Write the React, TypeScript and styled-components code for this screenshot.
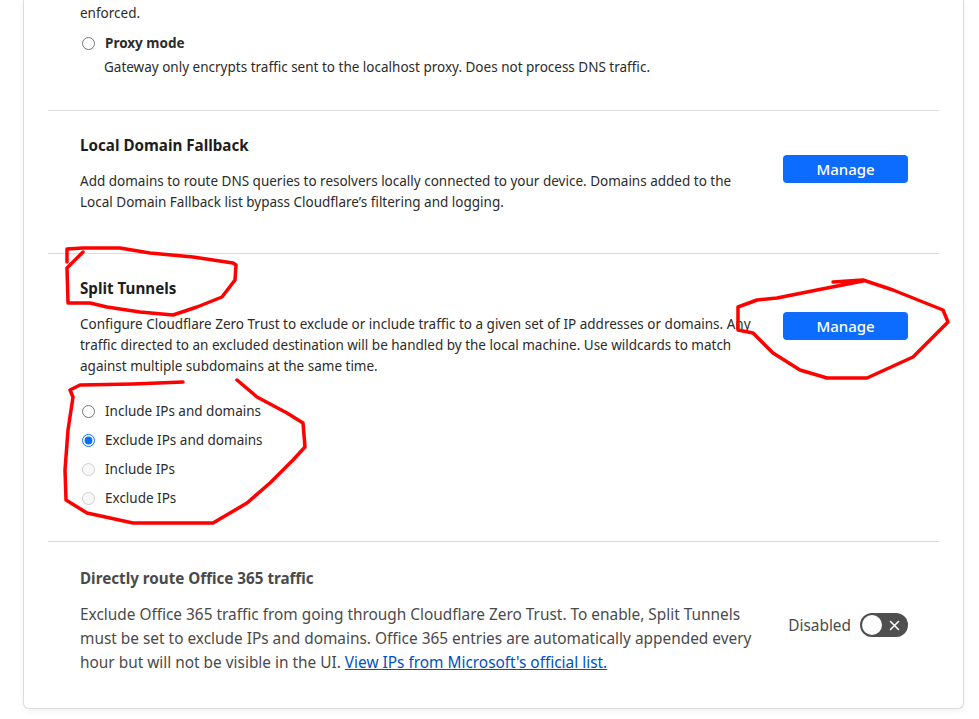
import React, { FC } from "react";
import styled, { createGlobalStyle } from "styled-components";

const GlobalStyle = createGlobalStyle`
  html, body {
    margin: 0;
    padding: 0;
    background: #ffffff;
  }
  body {
    font-family: "Noto Sans", "Open Sans", sans-serif;
    color: #1d1d1d;
  }
`;

const Page = styled.div`
  position: relative;
  width: 979px;
  height: 719px;
  overflow: hidden;
  padding-left: 23px;
  box-sizing: border-box;
`;

const Card = styled.div`
  width: 941px;
  box-sizing: border-box;
  background: #ffffff;
  border: 1px solid #dcdcdc;
  border-top: none;
  border-radius: 0 0 6px 6px;
  box-shadow: 0 2px 6px rgba(0, 0, 0, 0.06);
  padding: 0 24px;
`;

const Section = styled.div<{ $top: number; $bottom: number }>`
  display: flex;
  align-items: flex-start;
  padding: ${(p) => p.$top}px 31px ${(p) => p.$bottom}px 32px;
  & + & {
    border-top: 1px solid #dcdcdc;
  }
`;

const Content = styled.div`
  flex: 0 0 678px;
`;

const Aside = styled.div<{ $offset: number }>`
  margin-left: auto;
  margin-top: ${(p) => p.$offset}px;
  display: flex;
  align-items: center;
  gap: 9px;
`;

const Title = styled.div<{ $muted?: boolean }>`
  font-size: 15.2px;
  line-height: 24px;
  font-weight: 700;
  color: ${(p) => (p.$muted ? "#4a4a4a" : "#1d1d1d")};
`;

const Desc = styled.p<{ $gap: number; $large?: boolean }>`
  margin: ${(p) => p.$gap}px 0 0;
  font-size: ${(p) => (p.$large ? 15.4 : 13.5)}px;
  line-height: ${(p) => (p.$large ? 24 : 21)}px;
  color: ${(p) => (p.$large ? "#4a4a4a" : "#2b2b2b")};
`;

const Small = styled.div`
  font-size: 13.5px;
  line-height: 20px;
  color: #2b2b2b;
`;

const RadioList = styled.div<{ $gap: number }>`
  display: flex;
  flex-direction: column;
  gap: 9px;
  margin-top: ${(p) => p.$gap}px;
`;

const RadioRow = styled.label<{ $bold?: boolean }>`
  display: flex;
  align-items: center;
  height: 20px;
  font-size: 13.5px;
  font-weight: ${(p) => (p.$bold ? 700 : 400)};
  color: #2b2b2b;
  input {
    width: 13px;
    height: 13px;
    margin: 0 10px 0 2px;
    accent-color: #0b6cff;
  }
`;

const Hint = styled.div`
  margin: 4px 0 0 24px;
  font-size: 13.5px;
  line-height: 20px;
  color: #2b2b2b;
`;

const Button = styled.button`
  width: 125px;
  height: 28px;
  border: none;
  border-radius: 4px;
  background: #0b6cff;
  color: #ffffff;
  font-family: inherit;
  font-size: 15px;
  font-weight: 500;
  cursor: pointer;
`;

const Link = styled.a`
  color: #0051c3;
  text-decoration: underline;
`;

const ToggleLabel = styled.span`
  font-size: 15.4px;
  color: #4a4a4a;
`;

const Toggle = styled.div`
  position: relative;
  width: 48px;
  height: 24px;
  border-radius: 12px;
  background: #4f4f4f;
  display: flex;
  align-items: center;
  justify-content: flex-end;
  padding-right: 8px;
  box-sizing: border-box;
`;

const Knob = styled.span`
  position: absolute;
  left: 2px;
  top: 2px;
  width: 20px;
  height: 20px;
  border-radius: 50%;
  background: #ffffff;
`;

const Marks = styled.svg`
  position: absolute;
  top: 0;
  left: 0;
  pointer-events: none;
`;

const Radio: FC<{ label: string; checked?: boolean; disabled?: boolean; bold?: boolean }> = ({
  label,
  checked,
  disabled,
  bold,
}) => (
  <RadioRow $bold={bold}>
    <input type="radio" name={bold ? "mode" : "split"} defaultChecked={checked} disabled={disabled} />
    {label}
  </RadioRow>
);

const stroke = {
  fill: "none",
  stroke: "#ff0000",
  strokeWidth: 3.5,
  strokeLinejoin: "round" as const,
  strokeLinecap: "round" as const,
};

export default function App() {
  return (
    <>
      <GlobalStyle />
      <Page>
        <Card>
          <Section $top={3} $bottom={33}>
            <Content>
              <Small>enforced.</Small>
              <RadioList $gap={10}>
                <div>
                  <Radio label="Proxy mode" bold />
                  <Hint>Gateway only encrypts traffic sent to the localhost proxy. Does not process DNS traffic.</Hint>
                </div>
              </RadioList>
            </Content>
          </Section>

          <Section $top={22} $bottom={40}>
            <Content>
              <Title>Local Domain Fallback</Title>
              <Desc $gap={14}>
                Add domains to route DNS queries to resolvers locally connected to your device. Domains added to the
                Local Domain Fallback list bypass Cloudflare’s filtering and logging.
              </Desc>
            </Content>
            <Aside $offset={22}>
              <Button>Manage</Button>
            </Aside>
          </Section>

          <Section $top={22} $bottom={33}>
            <Content>
              <Title>Split Tunnels</Title>
              <Desc $gap={14}>
                Configure Cloudflare Zero Trust to exclude or include traffic to a given set of IP addresses or domains. Any
                traffic directed to an excluded destination will be handled by the local machine. Use wildcards to match
                against multiple subdomains at the same time.
              </Desc>
              <RadioList $gap={24}>
                <Radio label="Include IPs and domains" />
                <Radio label="Exclude IPs and domains" checked />
                <Radio label="Include IPs" disabled />
                <Radio label="Exclude IPs" disabled />
              </RadioList>
            </Content>
            <Aside $offset={36}>
              <Button>Manage</Button>
            </Aside>
          </Section>

          <Section $top={24} $bottom={33}>
            <Content>
              <Title $muted>Directly route Office 365 traffic</Title>
              <Desc $gap={13} $large>
                Exclude Office 365 traffic from going through Cloudflare Zero Trust. To enable, Split Tunnels
                must be set to exclude IPs and domains. Office 365 entries are automatically appended every
                hour but will not be visible in the UI. <Link href="#">View IPs from Microsoft's official list.</Link>
              </Desc>
            </Content>
            <Aside $offset={47}>
              <ToggleLabel>Disabled</ToggleLabel>
              <Toggle>
                <Knob />
                <svg width="11" height="11" viewBox="0 0 11 11">
                  <path d="M1.5 1.5 L9.5 9.5 M9.5 1.5 L1.5 9.5" stroke="#ffffff" strokeWidth="1.6" strokeLinecap="round" />
                </svg>
              </Toggle>
            </Aside>
          </Section>
        </Card>

        <Marks width="979" height="719" viewBox="0 0 979 719">
          <path
            {...stroke}
            d="M67 262 L67 249 L83 248 L120 248 L150 253 L193 257 L233 263 L236 265 L235 280 L222 297 L197 307 L173 315 L140 312 L107 307 L90 303 L68 303 L67 268 L83 252"
          />
          <path
            {...stroke}
            d="M833 282 L863 280 L893 290 L943 310 L948 322 L933 337 L913 357 L867 378 L827 378 L800 370 L773 353 L753 333 L738 330 L738 307 L757 300 L777 298 L817 290 L863 281"
          />
          <path
            {...stroke}
            d="M183 382 L133 384 L80 385 L70 390 L73 397 L68 430 L65 470 L66 500 L87 513 L133 523 L213 523 L247 503 L270 483 L293 460 L305 447 L303 423 L287 413 L257 397 L237 380"
          />
        </Marks>
      </Page>
    </>
  );
}
